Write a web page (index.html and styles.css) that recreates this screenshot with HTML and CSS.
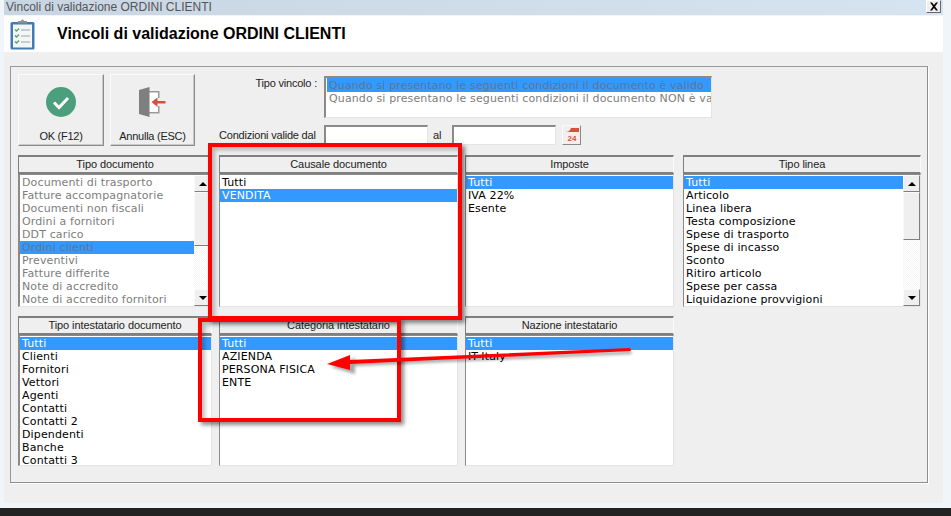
FILE: index.html
```html
<!DOCTYPE html>
<html lang="it">
<head>
<meta charset="utf-8">
<title>Vincoli di validazione ORDINI CLIENTI</title>
<link rel="stylesheet" href="styles.css">
</head>
<body>
<div class="window">
  <div class="titlebar">
    <span class="titletext">Vincoli di validazione ORDINI CLIENTI</span>
    <button class="closebtn" type="button">
      <svg width="12" height="9" viewBox="0 0 12 9"><path d="M2 0.5h2l2 2.5 2-2.5h2L7 4.5l3 4H8L6 6 4 8.500H2l3-4z" fill="#000"/></svg>
    </button>
  </div>
  <div class="inner">
    <header class="head">
      <svg class="headicon" width="25" height="31" viewBox="0 0 25 31">
        <rect x="0.5" y="3" width="24" height="27.5" rx="1.5" fill="#3f7cb5"/>
        <rect x="3" y="5.5" width="19" height="23" fill="#f4f6f6"/>
        <path d="M8 4V2h3l1-1.5h1L14 2h3v2.500H8z" fill="#8a8f94"/>
        <path d="M5 10.500l1.500 1.500 2.500-2.500M5 16.500l1.500 1.500 2.500-2.500M5 22.500l1.500 1.500 2.500-2.500" fill="none" stroke="#4ea06e" stroke-width="1.3"/>
        <path d="M11 11h9M11 17h9M11 23h9" stroke="#9aa4a8" stroke-width="1"/>
      </svg>
      <h1 class="headtitle">Vincoli di validazione ORDINI CLIENTI</h1>
    </header>
    <main class="body">
      <section class="group">
        <div class="toprow">
          <button class="bigbtn okbtn" type="button">
            <svg width="30" height="30" viewBox="0 0 30 30"><circle cx="15" cy="15" r="15" fill="#4c9f7d"/><path d="M8 15.500l5 5 9-9.500" fill="none" stroke="#fff" stroke-width="3"/></svg>
            <span>OK (F12)</span>
          </button>
          <button class="bigbtn cancelbtn" type="button">
            <svg width="30" height="30" viewBox="0 0 30 30">
              <path d="M11 4.500h9v22h-9z" fill="#fff"/>
              <path d="M11 4h10.500v7H20V5.500h-9zM11 26.500h10.500V19H20v6h-9z" fill="#9a9a9a"/>
              <path d="M1 3L11.500 0v30L1 27z" fill="#7f7f7f"/>
              <path d="M13.500 15l6-4.500V14h8v2.500h-8v3.500z" fill="#d9503a"/>
            </svg>
            <span>Annulla (ESC)</span>
          </button>
          <div class="filters">
            <div class="filterrow vincolo">
              <span class="flabel lab-vincolo">Tipo vincolo :</span>
              <div class="listbox vincolobox">
                <div class="row sel dim">Quando si presentano le seguenti condizioni il documento è valido</div>
                <div class="row dim">Quando si presentano le seguenti condizioni il documento NON è valido</div>
              </div>
            </div>
            <div class="filterrow dates">
              <span class="flabel">Condizioni valide dal</span>
              <div class="field"></div>
              <span class="allabel">al</span>
              <div class="field"></div>
              <button class="calbtn" type="button">
                <svg width="16" height="16" viewBox="0 0 16 16">
                  <path d="M1 5C4 5 6 4 7 1h8v4z" fill="#d9503a"/>
                  <rect x="1" y="5" width="14" height="11" fill="#fbeeea"/>
                  <text x="8" y="14" class="caltext" text-anchor="middle">24</text>
                </svg>
              </button>
            </div>
          </div>
        </div>

        <div class="panels r1">
          <div class="panel c-a">
            <div class="phead">Tipo documento</div>
            <div class="listbox plist">
              <div class="rows">
                <div class="row dim">Documenti di trasporto</div>
                <div class="row dim">Fatture accompagnatorie</div>
                <div class="row dim">Documenti non fiscali</div>
                <div class="row dim">Ordini a fornitori</div>
                <div class="row dim">DDT carico</div>
                <div class="row sel dim">Ordini clienti</div>
                <div class="row dim">Preventivi</div>
                <div class="row dim">Fatture differite</div>
                <div class="row dim">Note di accredito</div>
                <div class="row dim">Note di accredito fornitori</div>
              </div>
              <div class="scroll">
                <div class="sbtn"><span class="up"></span></div>
                <div class="thumb thumb-low"></div>
                <div class="track"></div>
                <div class="sbtn"><span class="down"></span></div>
              </div>
            </div>
          </div>
          <div class="panel c-b">
            <div class="phead">Causale documento</div>
            <div class="listbox plist">
              <div class="rows">
                <div class="row">Tutti</div>
                <div class="row sel">VENDITA</div>
              </div>
            </div>
          </div>
          <div class="panel c-c">
            <div class="phead">Imposte</div>
            <div class="listbox plist">
              <div class="rows">
                <div class="row sel">Tutti</div>
                <div class="row">IVA 22%</div>
                <div class="row">Esente</div>
              </div>
            </div>
          </div>
          <div class="panel c-d">
            <div class="phead">Tipo linea</div>
            <div class="listbox plist">
              <div class="rows">
                <div class="row sel">Tutti</div>
                <div class="row">Articolo</div>
                <div class="row">Linea libera</div>
                <div class="row">Testa composizione</div>
                <div class="row">Spese di trasporto</div>
                <div class="row">Spese di incasso</div>
                <div class="row">Sconto</div>
                <div class="row">Ritiro articolo</div>
                <div class="row">Spese per cassa</div>
                <div class="row">Liquidazione provvigioni</div>
              </div>
              <div class="scroll">
                <div class="sbtn"><span class="up"></span></div>
                <div class="thumb"></div>
                <div class="track"></div>
                <div class="sbtn"><span class="down"></span></div>
              </div>
            </div>
          </div>
        </div>

        <div class="panels r2">
          <div class="panel c-a">
            <div class="phead">Tipo intestatario documento</div>
            <div class="listbox plist">
              <div class="rows">
                <div class="row sel">Tutti</div>
                <div class="row">Clienti</div>
                <div class="row">Fornitori</div>
                <div class="row">Vettori</div>
                <div class="row">Agenti</div>
                <div class="row">Contatti</div>
                <div class="row">Contatti 2</div>
                <div class="row">Dipendenti</div>
                <div class="row">Banche</div>
                <div class="row">Contatti 3</div>
              </div>
            </div>
          </div>
          <div class="panel c-b">
            <div class="phead">Categoria intestatario</div>
            <div class="listbox plist">
              <div class="rows">
                <div class="row sel">Tutti</div>
                <div class="row">AZIENDA</div>
                <div class="row">PERSONA FISICA</div>
                <div class="row">ENTE</div>
              </div>
            </div>
          </div>
          <div class="panel c-c">
            <div class="phead">Nazione intestatario</div>
            <div class="listbox plist">
              <div class="rows">
                <div class="row sel">Tutti</div>
                <div class="row">IT-Italy</div>
              </div>
            </div>
          </div>
        </div>
      </section>
    </main>
  </div>
  <div class="taskbar"></div>

  <div class="mark mark-one"></div>
  <div class="mark mark-two"></div>
  <svg class="arrow" width="951" height="516" viewBox="0 0 951 516">
    <path class="arrowshadow" d="M331 367l24-9 0 4 276-11 1 3-277 12 0 4 0 4z"/>
    <path class="arrowred" d="M327 364l23-9 0 5 280-12 1 3-281 13 0 6z"/>
  </svg>
</div>
</body>
</html>
```
FILE: styles.css
```css
* { box-sizing: border-box; }
html, body { margin: 0; padding: 0; }
body { width: 951px; height: 516px; overflow: hidden; background: #222; font-family: "Liberation Sans", Arial, sans-serif; }

.window { position: relative; width: 951px; height: 516px; display: flex; flex-direction: column; background: #f0f5fa; }

.titlebar { height: 15px; width: 939px; margin: 0 0 1px 4px; flex: none; display: flex; align-items: flex-start; justify-content: space-between; padding: 0 2px 0 2px; background: linear-gradient(90deg, #c8d5e2 0%, #d6e3f0 100%); }
.titletext { font: 12px/14px "Liberation Sans", Arial, sans-serif; color: #555; }
.closebtn { width: 15px; height: 13px; padding: 0; margin: 0; display: flex; align-items: center; justify-content: center; background: #efefef; border: 1px solid; border-color: #fff #666 #666 #fff; }

.inner { flex: none; width: 939px; height: 487px; margin-left: 4px; display: flex; flex-direction: column; background: #efefef; }
.head { height: 36px; flex: none; display: flex; align-items: center; background: #fff; padding-left: 6px; }
.headicon { flex: none; margin-right: 22px; }
.headtitle { margin: 0; font: bold 16px/20px "Liberation Sans", Arial, sans-serif; color: #000; }

.body { flex: 1; padding: 14px 15px 0 6px; }
.group { width: 918px; height: 417px; padding: 7px 6px 0 7px; border: 1px solid; border-color: #9a9a9a #8e8e8e #8e8e8e #9a9a9a; box-shadow: 1px 1px 0 #fff; }

.toprow { display: flex; height: 81px; }
.bigbtn { width: 86px; height: 72px; padding: 12px 0 0; margin-right: 6px; display: flex; flex-direction: column; align-items: center; justify-content: space-between; background: #efefef; border: 1px solid; border-color: #fafafa #8a8a8a #8a8a8a #fafafa; box-shadow: inset -1px -1px 0 #c9c9c9; font: 11px/14px "Liberation Sans", Arial, sans-serif; letter-spacing: -.25px; color: #222; }
.bigbtn span { padding-bottom: 2px; }
.cancelbtn { width: 85px; margin-right: 0; }

.filters { display: flex; flex-direction: column; gap: 7px; padding-top: 2px; flex: 1; }
.filterrow { display: flex; }
.vincolo { height: 42px; }
.dates { height: 20px; align-items: center; }
.flabel { font: 11px/14px "Liberation Sans", Arial, sans-serif; letter-spacing: -.2px; color: #222; white-space: nowrap; }
.lab-vincolo { width: 122px; text-align: right; margin-right: 7px; }
.dates .flabel { width: 96px; margin-left: 24px; margin-right: 9px; }
.listbox { background: #fff; border: 1px solid; border-color: #8a8a8a #e4e4e4 #e4e4e4 #8a8a8a; }
.vincolobox { width: 388px; height: 42px; padding: 0 0 0 1px; overflow: hidden; border-top-width: 2px; border-left-width: 2px; }
.vincolobox .row { padding-left: 2px; }
.vincolobox .row:first-child { height: 14px; padding-top: 1px; }
.field { width: 104px; height: 20px; background: #fff; border: 1px solid; border-color: #8a8a8a #e4e4e4 #e4e4e4 #8a8a8a; border-top-width: 2px; border-left-width: 2px; }
.allabel { width: 24px; padding-left: 5px; font: 11px/14px "Liberation Sans", Arial, sans-serif; color: #222; }
.calbtn { width: 19px; height: 20px; margin-left: 6px; padding: 0; display: flex; align-items: center; justify-content: center; background: #efefef; border: 1px solid; border-color: #fafafa #8a8a8a #8a8a8a #fafafa; }
.caltext { font: bold 8px "Liberation Sans", sans-serif; fill: #d9503a; }

.panels { display: flex; }
.r1 { height: 152px; margin-bottom: 9px; }
.r2 { height: 150px; }
.panel { display: flex; flex-direction: column; }
.c-a { width: 194px; margin-right: 7px; }
.c-b { width: 239px; margin-right: 7px; }
.c-c { width: 209px; margin-right: 9px; }
.c-d { width: 238px; }
.phead { height: 19px; flex: none; text-align: center; font: 11px/14px "Liberation Sans", Arial, sans-serif; letter-spacing: -.08px; color: #222; background: #efefef; border: 2px solid; border-color: #7f7f7f #fafafa #7f7f7f #7f7f7f; border-width: 2px 1px 2px 1px; }
.plist { flex: 1; display: flex; min-height: 0; overflow: hidden; border-width: 1px 1px 1px 1px; }
.c-a .plist { border-left-width: 2px; }
.rows { flex: 1; padding-top: 1px; min-width: 0; }
.row { height: 13px; padding-left: 2px; font: 11px/13px "DejaVu Sans", Verdana, sans-serif; letter-spacing: .13px; color: #000; white-space: nowrap; }
.row.sel { background: #3399ff; color: #fff; }
.row.dim { color: #7d7d7d; }
.row.sel.dim { color: #63758a; }

.scroll { width: 17px; flex: none; display: flex; flex-direction: column; }
.sbtn { height: 17px; flex: none; display: flex; align-items: center; justify-content: center; background: #efefef; border: 1px solid; border-color: #fafafa #7f7f7f #7f7f7f #fafafa; }
.up { width: 0; height: 0; border: 4px solid transparent; border-top: 0; border-bottom: 4px solid #000; }
.down { width: 0; height: 0; border: 4px solid transparent; border-bottom: 0; border-top: 4px solid #000; }
.thumb { height: 48px; flex: none; background: #efefef; border: 1px solid; border-color: #fafafa #7f7f7f #7f7f7f #fafafa; }
.thumb-low { height: 54px; }
.track { flex: 1; background: repeating-conic-gradient(#f5f5f5 0% 25%, #fff 0% 50%) 0 0 / 2px 2px; }

.taskbar { flex: 1; margin-top: 5px; background: #222; }

.mark { position: absolute; border: 4px solid #ff0000; box-shadow: 3px 3px 4px rgba(0,0,0,.45), inset 3px 3px 4px rgba(0,0,0,.25); pointer-events: none; }
.mark-one { left: 208px; top: 143px; width: 254px; height: 177px; }
.mark-two { left: 198px; top: 318px; width: 203px; height: 104px; }
.arrow { position: absolute; left: 0; top: 0; pointer-events: none; }
.arrowred { fill: #ff0000; }
.arrowshadow { fill: rgba(0,0,0,.35); filter: blur(1.5px); }
```
